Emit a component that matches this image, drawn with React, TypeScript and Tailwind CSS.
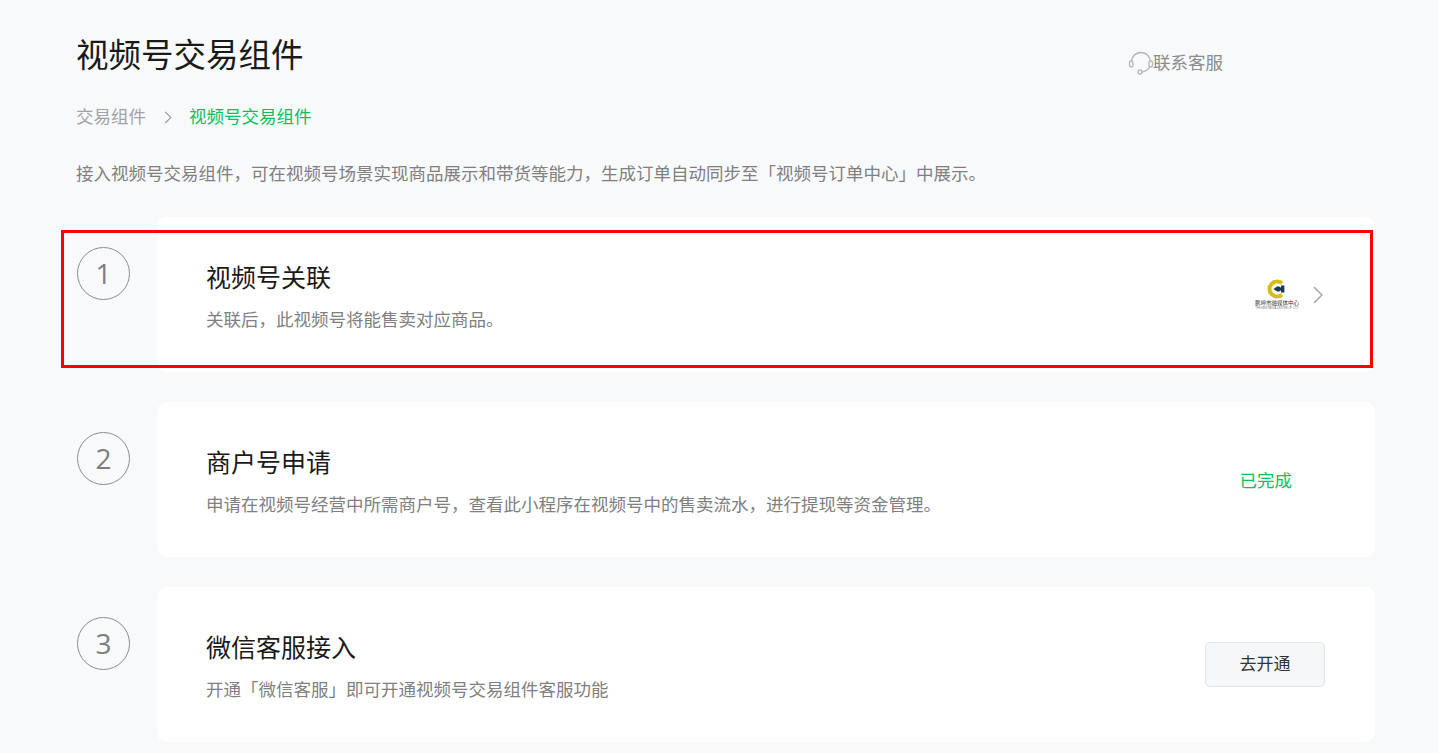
const cjk = "font-['Liberation_Sans','Noto_Sans_CJK_SC',sans-serif]";

function Logo() {
  return (
    <div className="flex w-[46px] flex-col items-center">
      <svg width="20" height="20" viewBox="0 0 20 20" className="mb-[1px]">
        <path d="M15 4.2A7.6 7.6 0 1 0 15 15.8" fill="none" stroke="#d8bd16" strokeWidth="4" />
        <path d="M6.5 10L10 7.4h2.2L14 8.8V6.6h3.4v6.8H14v-2.2l-1.8 1.4H10z" fill="#1f3550" />
      </svg>
      <div className="text-[5.5px] leading-[7px] whitespace-nowrap text-[#333]">鹏坤市融媒体中心</div>
      <div className="text-[2.6px] leading-[4px] whitespace-nowrap text-[#777]">THE NEW MEDIA CENTER OF CITY</div>
    </div>
  );
}

function Chevron({ className }: { className: string }) {
  return (
    <svg viewBox="0 0 10 16" fill="none" stroke="currentColor" strokeWidth="1.3" className={className}>
      <path d="M1.5 1l7 7-7 7" />
    </svg>
  );
}

function Step({ n, title, desc, children }: { n: number; title: string; desc: string; children: React.ReactNode }) {
  return (
    <div className="flex">
      <div className="mt-[30px] flex h-[53px] w-[53px] shrink-0 items-center justify-center rounded-full border border-[#8c8c8c] pb-[2px] font-['Open_Sans',sans-serif] text-[28px] text-[#7f7f7f]">
        {n}
      </div>
      <div className="ml-[27px] flex h-[155px] flex-1 items-center justify-between rounded-[10px] bg-white pl-[49px] pr-[50px]">
        <div className="mt-[3px]">
          <div className="text-[25px] leading-[34px] text-[#1a1a1a]">{title}</div>
          <div className="mt-[13px] text-[17.5px] leading-[24px] text-[#808080]">{desc}</div>
        </div>
        {children}
      </div>
    </div>
  );
}

export default function App() {
  return (
    <div className={`${cjk} h-[753px] overflow-hidden bg-[#f8f9fb] pl-[77px] pr-[63px]`}>
      <div className="relative pt-[36px]">
        <h1 className="-ml-[1px] text-[32.5px] leading-[40px] font-normal text-[#1a1a1a]">视频号交易组件</h1>
        <div className="absolute top-[50px] left-[1051px] flex items-center text-[17.5px] leading-[26px] text-[#8c8c8c]">
          <svg width="26" height="26" viewBox="0 0 26 26" fill="none" stroke="#b5b5b5" strokeWidth="1.3">
            <path d="M3.5 12.5C3.5 6.5 7.5 2.5 13 2.5s9.5 4 9.5 10c0 5-3 8.5-8 9.5" />
            <rect x="1.5" y="11" width="3.5" height="6" rx="1.75" fill="#f8f9fb" />
            <rect x="21" y="11" width="3.5" height="6" rx="1.75" fill="#f8f9fb" />
            <circle cx="12" cy="22" r="2" fill="#f8f9fb" />
          </svg>
          <span className="-ml-[1px]">联系客服</span>
        </div>
        <div className="mt-[28px] -ml-[1px] flex items-center text-[17.5px] leading-[26px]">
          <span className="text-[#a3a3a3]">交易组件</span>
          <Chevron className="mr-[17px] ml-[18px] h-[13px] w-[8px] text-[#8c8c8c]" />
          <span className="text-[#07c160]">视频号交易组件</span>
        </div>
        <p className="mt-[31px] -ml-[1px] text-[17.5px] leading-[26px] text-[#808080]">
          接入视频号交易组件，可在视频号场景实现商品展示和带货等能力，生成订单自动同步至「视频号订单中心」中展示。
        </p>
        <div className="mt-[30px] flex flex-col gap-[30px]">
          <Step n={1} title="视频号关联" desc="关联后，此视频号将能售卖对应商品。">
            <div className="flex items-center">
              <Logo />
              <Chevron className="mr-[1px] ml-[12px] h-[18px] w-[12px] text-[#a8a8a8]" />
            </div>
          </Step>
          <Step n={2} title="商户号申请" desc="申请在视频号经营中所需商户号，查看此小程序在视频号中的售卖流水，进行提现等资金管理。">
            <span className="mt-[4px] mr-[33px] text-[17.5px] text-[#07c160]">已完成</span>
          </Step>
          <Step n={3} title="微信客服接入" desc="开通「微信客服」即可开通视频号交易组件客服功能">
            <button className="h-[45px] w-[120px] rounded-[5px] border border-[#e2e4e8] bg-[#f6f7f9] text-[17px] text-[#333]">
              去开通
            </button>
          </Step>
        </div>
        <div className="pointer-events-none absolute top-[230px] left-[-16px] h-[138px] w-[1312px] border-[3px] border-[#ff0000]" />
      </div>
    </div>
  );
}
